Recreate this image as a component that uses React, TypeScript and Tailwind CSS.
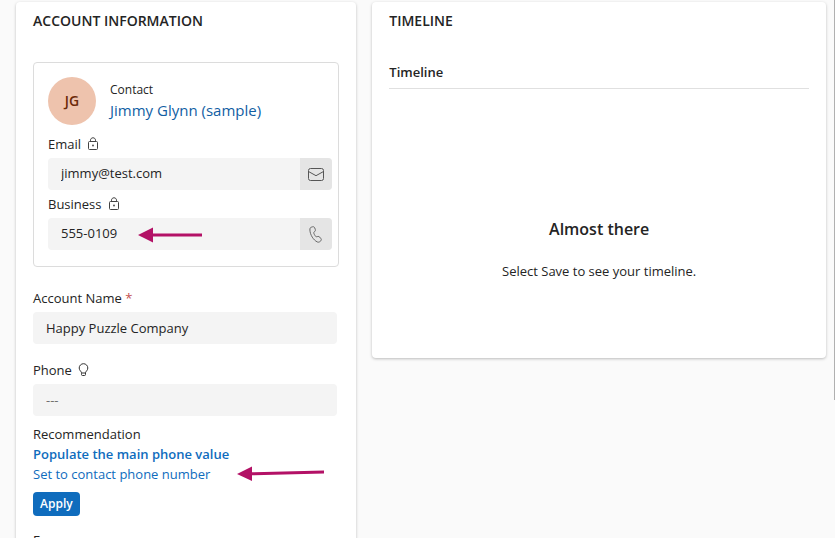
import type { ReactNode } from 'react';

function LockIcon() {
  return (
    <svg width="12" height="14" viewBox="0 0 12 14" fill="none" stroke="#424242" aria-hidden="true">
      <rect x="1.5" y="4.5" width="9" height="8" rx="1" />
      <path d="M3.5 4.5V3.2C3.5 1.7 4.6 0.8 6 0.8s2.500 0.900 2.500 2.400V4.500" />
      <circle cx="6" cy="8.500" r="0.900" fill="#424242" stroke="none" />
    </svg>
  );
}

function BulbIcon() {
  return (
    <svg width="11" height="14" viewBox="0 0 11 14" fill="none" stroke="#333" aria-hidden="true">
      <path d="M3.500 10.500V9.700C3.500 8.600 1.200 7.500 1.200 5A4.200 4.200 0 0 1 9.800 5C9.800 7.500 7.500 8.600 7.500 9.700V11.500A1 1 0 0 1 6.500 12.500H4.500A1 1 0 0 1 3.500 11.500ZM3.500 10H7.500" />
    </svg>
  );
}

function MailIcon() {
  return (
    <svg width="18" height="14" viewBox="0 0 18 14" fill="none" stroke="#555" aria-hidden="true">
      <rect x="1.500" y="1.500" width="15" height="12" rx="2" />
      <path d="M1.500 4.500L9 8.700L16.500 4.500" />
    </svg>
  );
}

function PhoneIcon() {
  return (
    <svg width="14" height="17" viewBox="0 0 14 17" fill="none" stroke="#666" strokeLinejoin="round" aria-hidden="true">
      <path d="M2.300 1.200L3.500 0.800C4.600 0.500 5.300 0.900 5.700 1.900L6.300 3.400C6.600 4.200 6.400 4.900 5.800 5.500L4.700 6.500C4.900 7.900 5.700 9.500 7.300 10.900L8.800 10.500C9.600 10.300 10.200 10.500 10.700 11.100L11.900 12.600C12.500 13.400 12.400 14.200 11.800 14.800L11 15.500C10.200 16.200 9.200 16.400 8.200 15.900C4.500 14.100 1.100 8.900 0.900 4C0.800 2.600 1.200 1.500 2.300 1.200Z" />
    </svg>
  );
}

function Label({ id, text, required, children }: {
  id: string; text: string; required?: boolean; children?: ReactNode;
}) {
  return (
    <label htmlFor={id} className="flex h-5 items-center gap-1.5 text-[13px]/5">
      <span>
        {text}
        {required && <span className="text-[#c4504f]"> *</span>}
      </span>
      {children}
    </label>
  );
}

function ContactField({ id, label, value, action, icon, children }: {
  id: string; label: string; value: string; action: string; icon: ReactNode; children?: ReactNode;
}) {
  return (
    <div>
      <Label id={id} text={label}><LockIcon /></Label>
      <div className="relative mt-1 flex h-8 overflow-hidden rounded bg-[#f4f4f4]">
        <input id={id} readOnly defaultValue={value} className="min-w-0 flex-1 px-[13px] text-[13px]" />
        <button aria-label={action} className="flex w-8 items-center justify-center bg-[#e5e5e5]">{icon}</button>
        {children}
      </div>
    </div>
  );
}

export default function App() {
  return (
    <main className="relative h-screen overflow-hidden bg-[#fafafa] pt-0.5 pr-[9px] pl-4 font-['Open_Sans','Noto_Sans',sans-serif] text-[#242424]">
      <div className="grid grid-cols-[3fr_4fr] items-start gap-4">
        <section className="rounded bg-white px-[17px] pt-[7px] pb-6 shadow-[0_1px_3px_rgba(0,0,0,0.25)]">
          <h2 className="text-sm/6 font-semibold">ACCOUNT INFORMATION</h2>
          <div className="mt-[29px] rounded border border-[#dcdcdc] pt-3.5 pr-1.5 pb-4 pl-3.5">
            <div className="flex items-center gap-3.5">
              <div className="flex size-12 items-center justify-center rounded-full bg-[#eec3ad] text-sm font-semibold text-[#6b2a08]">JG</div>
              <div className="pb-0.5">
                <p className="text-xs/5">Contact</p>
                <a href="#contact" className="block text-[15px]/5 text-[#115ea3]">Jimmy Glynn (sample)</a>
              </div>
            </div>
            <div className="mt-[9px] flex flex-col gap-1">
              <ContactField id="email" label="Email" value="jimmy@test.com" action="Send email" icon={<MailIcon />} />
              <ContactField id="business" label="Business" value="555-0109" action="Call" icon={<PhoneIcon />}>
                <svg className="absolute top-2 left-22" width="68" height="18" viewBox="0 0 68 18" fill="#b31166" aria-hidden="true">
                  <path d="M2 9L17 1.500V7.500H66V10.500H17V16.500Z" />
                </svg>
              </ContactField>
            </div>
          </div>

          <div className="mt-[21px] mr-0.5">
            <Label id="account" text="Account Name" required />
            <input id="account" required defaultValue="Happy Puzzle Company" className="mt-1 h-8 w-full rounded bg-[#f4f4f4] px-[13px] text-[13px]" />
          </div>
          <div className="mt-4 mr-0.5">
            <Label id="phone" text="Phone"><BulbIcon /></Label>
            <input id="phone" placeholder="---" className="mt-1 h-8 w-full rounded bg-[#f4f4f4] px-[13px] text-[13px] placeholder:text-[#707070]" />
          </div>

          <div className="relative mt-2 text-[13px]/5">
            <p>Recommendation</p>
            <p className="font-semibold text-[#0f6cbd]">Populate the main phone value</p>
            <a href="#recommendation" className="block text-[#0f6cbd]">Set to contact phone number</a>
            <svg className="absolute top-[38px] left-51" width="90" height="20" viewBox="0 0 90 20" fill="#b31166" aria-hidden="true">
              <path d="M0 12L15 4.500V10.300L87 8.500V11.500L15 13.300V19Z" />
            </svg>
            <button className="mt-2 h-6 rounded bg-[#0f6cbd] px-[7px] text-xs font-semibold text-white">Apply</button>
          </div>
          <div className="mt-3.5">
            <Label id="fax" text="Fax" />
            <input id="fax" placeholder="---" className="mt-1 h-8 w-full rounded bg-[#f4f4f4] px-[13px] text-[13px]" />
          </div>
        </section>

        <section className="rounded bg-white px-[17px] pt-[7px] pb-[77px] shadow-[0_1px_3px_rgba(0,0,0,0.25)]">
          <h2 className="text-sm/6 font-semibold">TIMELINE</h2>
          <h3 className="mt-[29px] border-b border-[#e0e0e0] pb-1.5 text-[13px]/5 font-semibold">Timeline</h3>
          <div className="mt-32 text-center">
            <p className="text-base/6 font-semibold">Almost there</p>
            <p className="mt-5 text-[13px]/5">Select Save to see your timeline.</p>
          </div>
        </section>
      </div>
      <div className="absolute top-0 right-0 h-100 w-px bg-[#b0b0b0]" />
    </main>
  );
}
